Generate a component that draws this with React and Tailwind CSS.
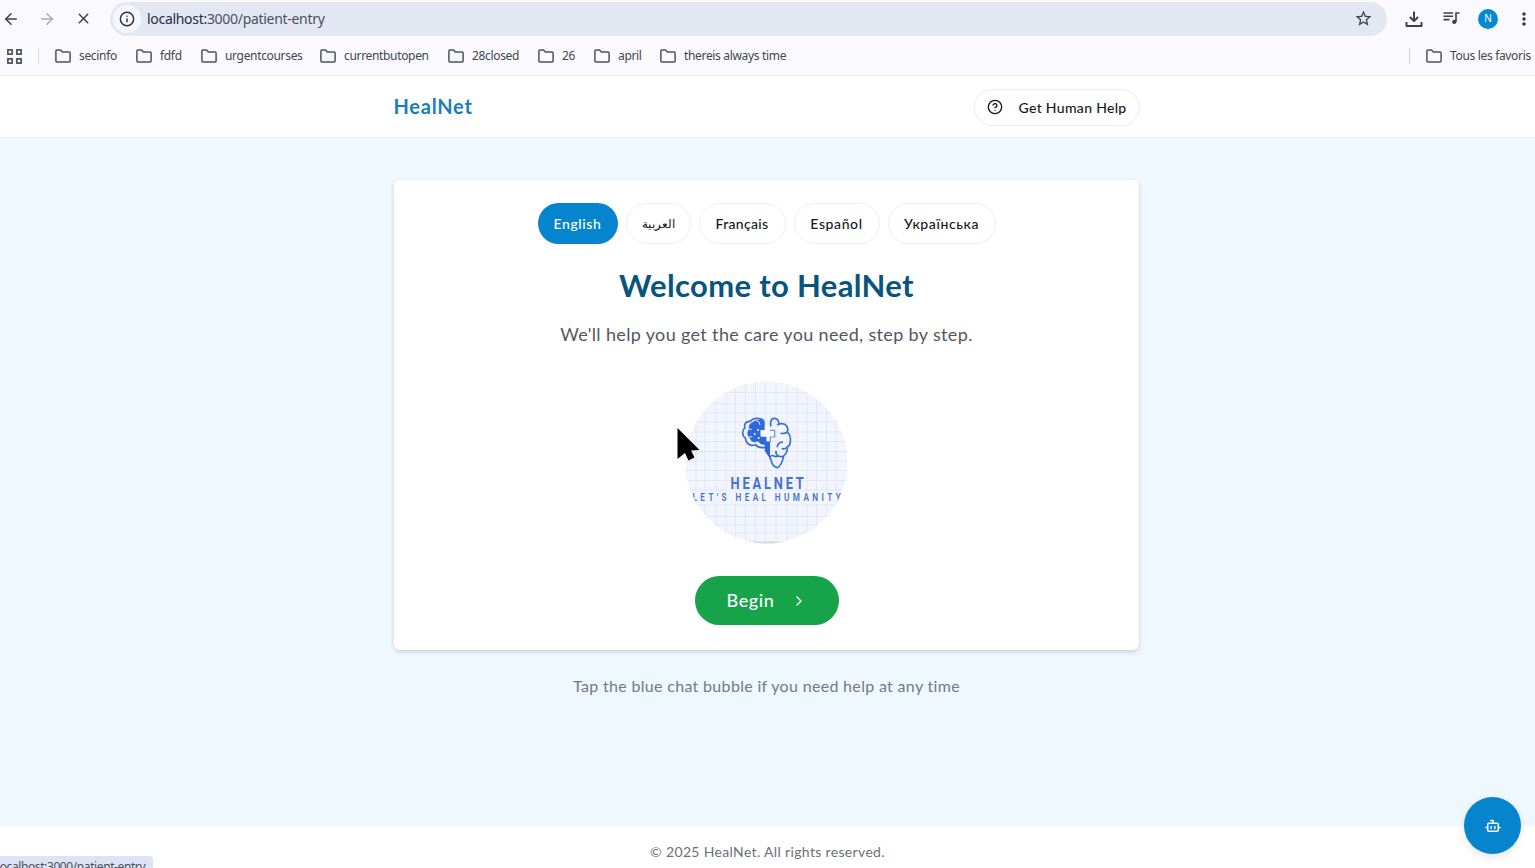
import React from "react";
import { ArrowLeft, ArrowRight, X, Info, CircleHelp, ChevronRight } from "lucide-react";
import { MdOutlineQueueMusic, MdMoreVert, MdOutlineStarBorder } from "react-icons/md";

const bookmarks = [
  { name: "secinfo", w: "w-[81px]" },
  { name: "fdfd", w: "w-[65px]" },
  { name: "urgentcourses", w: "w-[119px]" },
  { name: "currentbutopen", w: "w-[128px]" },
  { name: "28closed", w: "w-[90px]" },
  { name: "26", w: "w-[56px]" },
  { name: "april", w: "w-[66px]" },
  { name: "thereis always time", w: "w-[140px]" },
];

const languages = [
  { name: "English", w: "w-20", text: "text-[14px] tracking-[0.6px]", active: true },
  { name: "العربية", w: "w-[65px]", text: "text-[12px]" },
  { name: "Français", w: "w-[87px]", text: "text-[14px] tracking-[0.3px]" },
  { name: "Español", w: "w-[86px]", text: "text-[14px] tracking-[0.6px]" },
  { name: "Українська", w: "w-[108px]", text: "text-[14px] tracking-[0.6px]" },
];

function Folder() {
  return (
    <svg className="h-[14px] w-4 shrink-0" viewBox="0 0 16 14" fill="none" stroke="#50525a" strokeWidth="1.5" strokeLinejoin="round">
      <path d="M.9 11.9V2q0-1 1-1h3.7l1.7 1.9h6.8q1 0 1 1v8q0 1-1 1H1.900q-1 0-1-1z" />
    </svg>
  );
}

function Bookmark({ name, w }) {
  return (
    <div className={`${w} flex shrink-0 items-center gap-2 whitespace-nowrap`}>
      <Folder />
      <span>{name}</span>
    </div>
  );
}

function Browser() {
  return (
    <div className="flex h-[76px] shrink-0 flex-col border-b border-[#e8e8ef] bg-[#f9f9fe] font-['Noto_Sans',sans-serif] text-[#43464e]">
      <div className="flex h-[37px] items-center">
        <ArrowLeft className="ml-0.5 size-[18px] text-[#3d3f45]" strokeWidth={2} />
        <ArrowRight className="ml-[18px] size-[18px] text-[#aaabb1]" strokeWidth={2} />
        <X className="ml-[19px] size-[17px] text-[#3d3f45]" strokeWidth={2} />
        <div className="ml-[18px] flex h-[34px] w-[1277px] items-center rounded-full bg-[#e3e7f2]">
          <div className="ml-[3px] flex size-7 items-center justify-center rounded-full bg-[#f5f7fd]">
            <Info className="size-4 text-[#303238]" strokeWidth={2.2} />
          </div>
          <span className="ml-[6px] text-[14px] tracking-[-0.3px] text-[#4b5060]">
            <span className="text-[#252d47]">localhost:</span>3000/patient-entry
          </span>
          <MdOutlineStarBorder className="mr-[14px] ml-auto size-[19px] text-[#3d3f45]" />
        </div>
        <svg className="ml-[18px] h-[18px] w-[18px]" viewBox="0 0 18 18" fill="none" stroke="#3d3f45" strokeWidth="1.900">
          <path d="M9 1.500v9.500M4.900 7 9 11.100 13.100 7M1.500 12v4h15v-4" strokeLinejoin="round" />
        </svg>
        <svg className="mb-0.5 ml-5 h-[14px] w-[17px]" viewBox="0 0 17 14" fill="none" stroke="#3d3f45" strokeWidth="1.600">
          <path d="M.5 2h9.500M.5 5.300h9.500M.5 8.600h6M13 11V2h3.500" />
          <circle cx="11.200" cy="10.900" r="2.100" fill="#3d3f45" stroke="none" />
        </svg>
        <div className="ml-[18px] flex size-5 items-center justify-center rounded-full bg-[#0788d1] text-[10px] text-white">N</div>
        <MdMoreVert className="ml-4 size-[20px] shrink-0 text-[#34363b]" />
      </div>
      <div className="flex h-[38px] items-center pl-[7px] text-[12px] tracking-[-0.33px]">
        <svg className="size-[15px]" viewBox="0 0 15 15" fill="none" stroke="#50525a" strokeWidth="1.700">
          <rect x=".9" y=".9" width="4.200" height="4.200" />
          <rect x="9.900" y=".9" width="4.200" height="4.200" />
          <rect x=".9" y="9.900" width="4.200" height="4.200" />
          <rect x="9.900" y="9.900" width="4.200" height="4.200" />
        </svg>
        <div className="mr-4 ml-4 h-4 w-px bg-[#d5daea]" />
        {bookmarks.map((b) => (
          <Bookmark key={b.name} {...b} />
        ))}
        <div className="mr-4 ml-auto h-4 w-px bg-[#ccd5ec]" />
        <Bookmark name="Tous les favoris" w="w-[109px]" />
      </div>
    </div>
  );
}

const vLines = [11, 20, 31, 41, 50.5, 60.5, 70.5, 80.5, 91, 102, 112, 122, 131.5, 141.5, 151];
const hLines = [11.5, 23, 32, 41, 51, 60.5, 70.5, 80, 89.5, 99.5, 109, 124, 135.5, 144, 152];

function Brain() {
  return (
    <g transform="translate(49 29) scale(.3333)" strokeLinecap="round" strokeLinejoin="round" fill="none">
      <path
        d="M88 30C74 22 56 24 49 34C36 33 29 43 33 53C23 61 24 78 34 84C35 101 50 110 64 104C72 113 83 114 92 112"
        stroke="#3a6fd8"
        strokeWidth="5"
      />
      <path
        d="M92 34C84 26 66 28 57 36C46 41 42 48 45 58C37 66 40 80 47 84C52 97 63 99 72 94C78 103 86 105 92 104V122L108 146V94H98V76H80V60H92z"
        fill="#2f68da"
      />
      <path d="M68 32q10 2 10 12M36 60q8-8 16-2M40 86q4-8 14-6" stroke="#e6eefc" strokeWidth="3" />
      <path d="M80 62H93V48H109V62H122V80H109V94H98V80H80z" fill="#f5f8fe" />
      <path d="M109 61H122V81H109V95" stroke="#6b90de" strokeWidth="3.500" />
      <g fill="#eef4ff">
        <circle cx="72" cy="60" r="3" />
        <circle cx="62" cy="72" r="3" />
        <circle cx="74" cy="84" r="3" />
      </g>
      <path
        d="M110 48V36Q112 24 123 25Q134 27 135 42M131 44Q149 36 158 48Q164 57 160 66M142 70Q153 72 160 66Q172 78 169 96Q167 108 159 112Q162 126 149 138Q142 142 133 138M145 96Q131 98 130 110M159 112Q154 118 145 116M133 138Q125 134 126 124M108 146Q108 133 120 138Q126 142 133 138M111 148Q114 170 130 173Q143 166 149 139"
        stroke="#3a6fd8"
        strokeWidth="5"
      />
    </g>
  );
}

function Logo() {
  return (
    <svg className="size-[163px]" viewBox="0 0 163 163">
      <defs>
        <clipPath id="disc">
          <circle cx="81.5" cy="81.5" r="81" />
        </clipPath>
      </defs>
      <g clipPath="url(#disc)">
        <rect width="163" height="163" fill="#f2f5fd" />
        <g stroke="#e2e7f3" strokeWidth="1">
          {vLines.map((x) => (
            <line key={x} x1={x} x2={x} y1="0" y2="163" />
          ))}
          {hLines.map((y) => (
            <line key={y} x1="0" x2="163" y1={y} y2={y} />
          ))}
        </g>
        <rect x="0" y="160.5" width="163" height="2.5" fill="#d6d8df" />
        <rect x="5" y="111" width="153" height="12" fill="#f2f5fd" />
        <Brain />
        <g fill="#4771cf" fontFamily="Roboto, sans-serif" fontWeight="700">
          <g transform="translate(45.5 108) scale(.78 1)">
            <text fontSize="16.5" textLength="94" lengthAdjust="spacing">HEALNET</text>
          </g>
          <g transform="translate(7.5 120) scale(.78 1)">
            <text fontSize="10.5" fontWeight="600" textLength="190" lengthAdjust="spacing">LET'S HEAL HUMANITY</text>
          </g>
        </g>
      </g>
    </svg>
  );
}

export default function App() {
  return (
    <div className="relative flex h-[868px] w-full flex-col overflow-hidden bg-[#eff7ff] font-['Lato','Noto_Sans',sans-serif]">
      <Browser />
      <header className="flex h-[62px] shrink-0 justify-center border-b border-[#e9eff6] bg-white pr-0.5">
        <div className="flex w-[746px] items-center justify-between pb-px">
          <h1 className="text-[20px] font-bold tracking-[0.75px] text-[#1b7eb8]">HealNet</h1>
          <button className="flex h-[37px] w-[166px] translate-y-px items-center rounded-full border border-[#ebecef] pl-3 text-[14px] font-medium tracking-[0.32px] whitespace-nowrap text-[#16181d]">
            <CircleHelp className="mr-4 size-4" strokeWidth={2} />
            Get Human Help
          </button>
        </div>
      </header>
      <main className="flex grow flex-col items-center pt-[42px] pr-0.5">
        <section className="flex h-[470px] w-[745px] shrink-0 flex-col items-center rounded-md bg-white pt-[23px] shadow-[0_2px_4px_rgba(40,55,80,0.2)]">
          <div className="flex gap-2">
            {languages.map((l) => (
              <button
                key={l.name}
                className={`${l.w} ${l.text} flex h-[41px] items-center justify-center rounded-full font-medium ${
                  l.active ? "bg-[#0684ce] text-white" : "border border-[#eeeff2] bg-white text-[#16181d]"
                }`}
              >
                {l.name}
              </button>
            ))}
          </div>
          <h2 className="mt-[23px] text-[31px] leading-9 font-bold tracking-[0.35px] text-[#07557e]">Welcome to HealNet</h2>
          <p className="mt-[17px] text-[18px] leading-7 tracking-[0.35px] text-[#54575d]">We'll help you get the care you need, step by step.</p>
          <div className="mt-[33px]">
            <Logo />
          </div>
          <button className="mt-8 flex h-[49px] w-36 items-center rounded-full bg-[#16a34a] pl-8 text-left text-[18px] font-medium tracking-[0.6px] text-white">
            <span className="w-16">Begin</span>
            <ChevronRight className="size-4" strokeWidth={2} />
          </button>
        </section>
        <p className="mt-6 text-[16px] leading-6 tracking-[0.32px] text-[#717b85]">Tap the blue chat bubble if you need help at any time</p>
      </main>
      <footer className="flex h-[42px] shrink-0 items-center justify-center bg-white pt-[9px] text-[14px] tracking-[0.34px] text-[#6b7078]">
        © 2025 HealNet. All rights reserved.
      </footer>

      <button className="absolute top-[797px] left-[1464px] flex size-[57px] items-center justify-center rounded-full bg-[#0684ce] shadow-[0_4px_8px_rgba(30,40,60,0.1)]">
        <svg className="size-4" viewBox="0 0 16 16" fill="none" stroke="white" strokeWidth="1.500" strokeLinecap="round" strokeLinejoin="round">
          <path d="M8 5V2.500H5.800M1 9.500h1.500M13.500 9.500H15M6.200 8.600v2M9.800 8.600v2" />
          <rect x="2.700" y="5.300" width="10.600" height="8" rx="1.300" />
        </svg>
      </button>
      <div className="absolute top-[856px] left-0 flex h-3 w-[153px] overflow-hidden rounded-tr bg-[#dde2f4] font-['Noto_Sans',sans-serif] text-[12px] leading-[22px] tracking-[-0.4px] whitespace-nowrap text-[#4b5060]">
        <span className="-ml-[3px]">localhost:3000/patient-entry</span>
      </div>
      <svg className="absolute top-[426px] left-[675px] h-9 w-6" viewBox="0 0 24 36">
        <path d="M2.500 2v31l7.500-6 3.500 7.500 6-3L16 24.500l8.500-.5z" fill="#000" />
      </svg>
    </div>
  );
}
